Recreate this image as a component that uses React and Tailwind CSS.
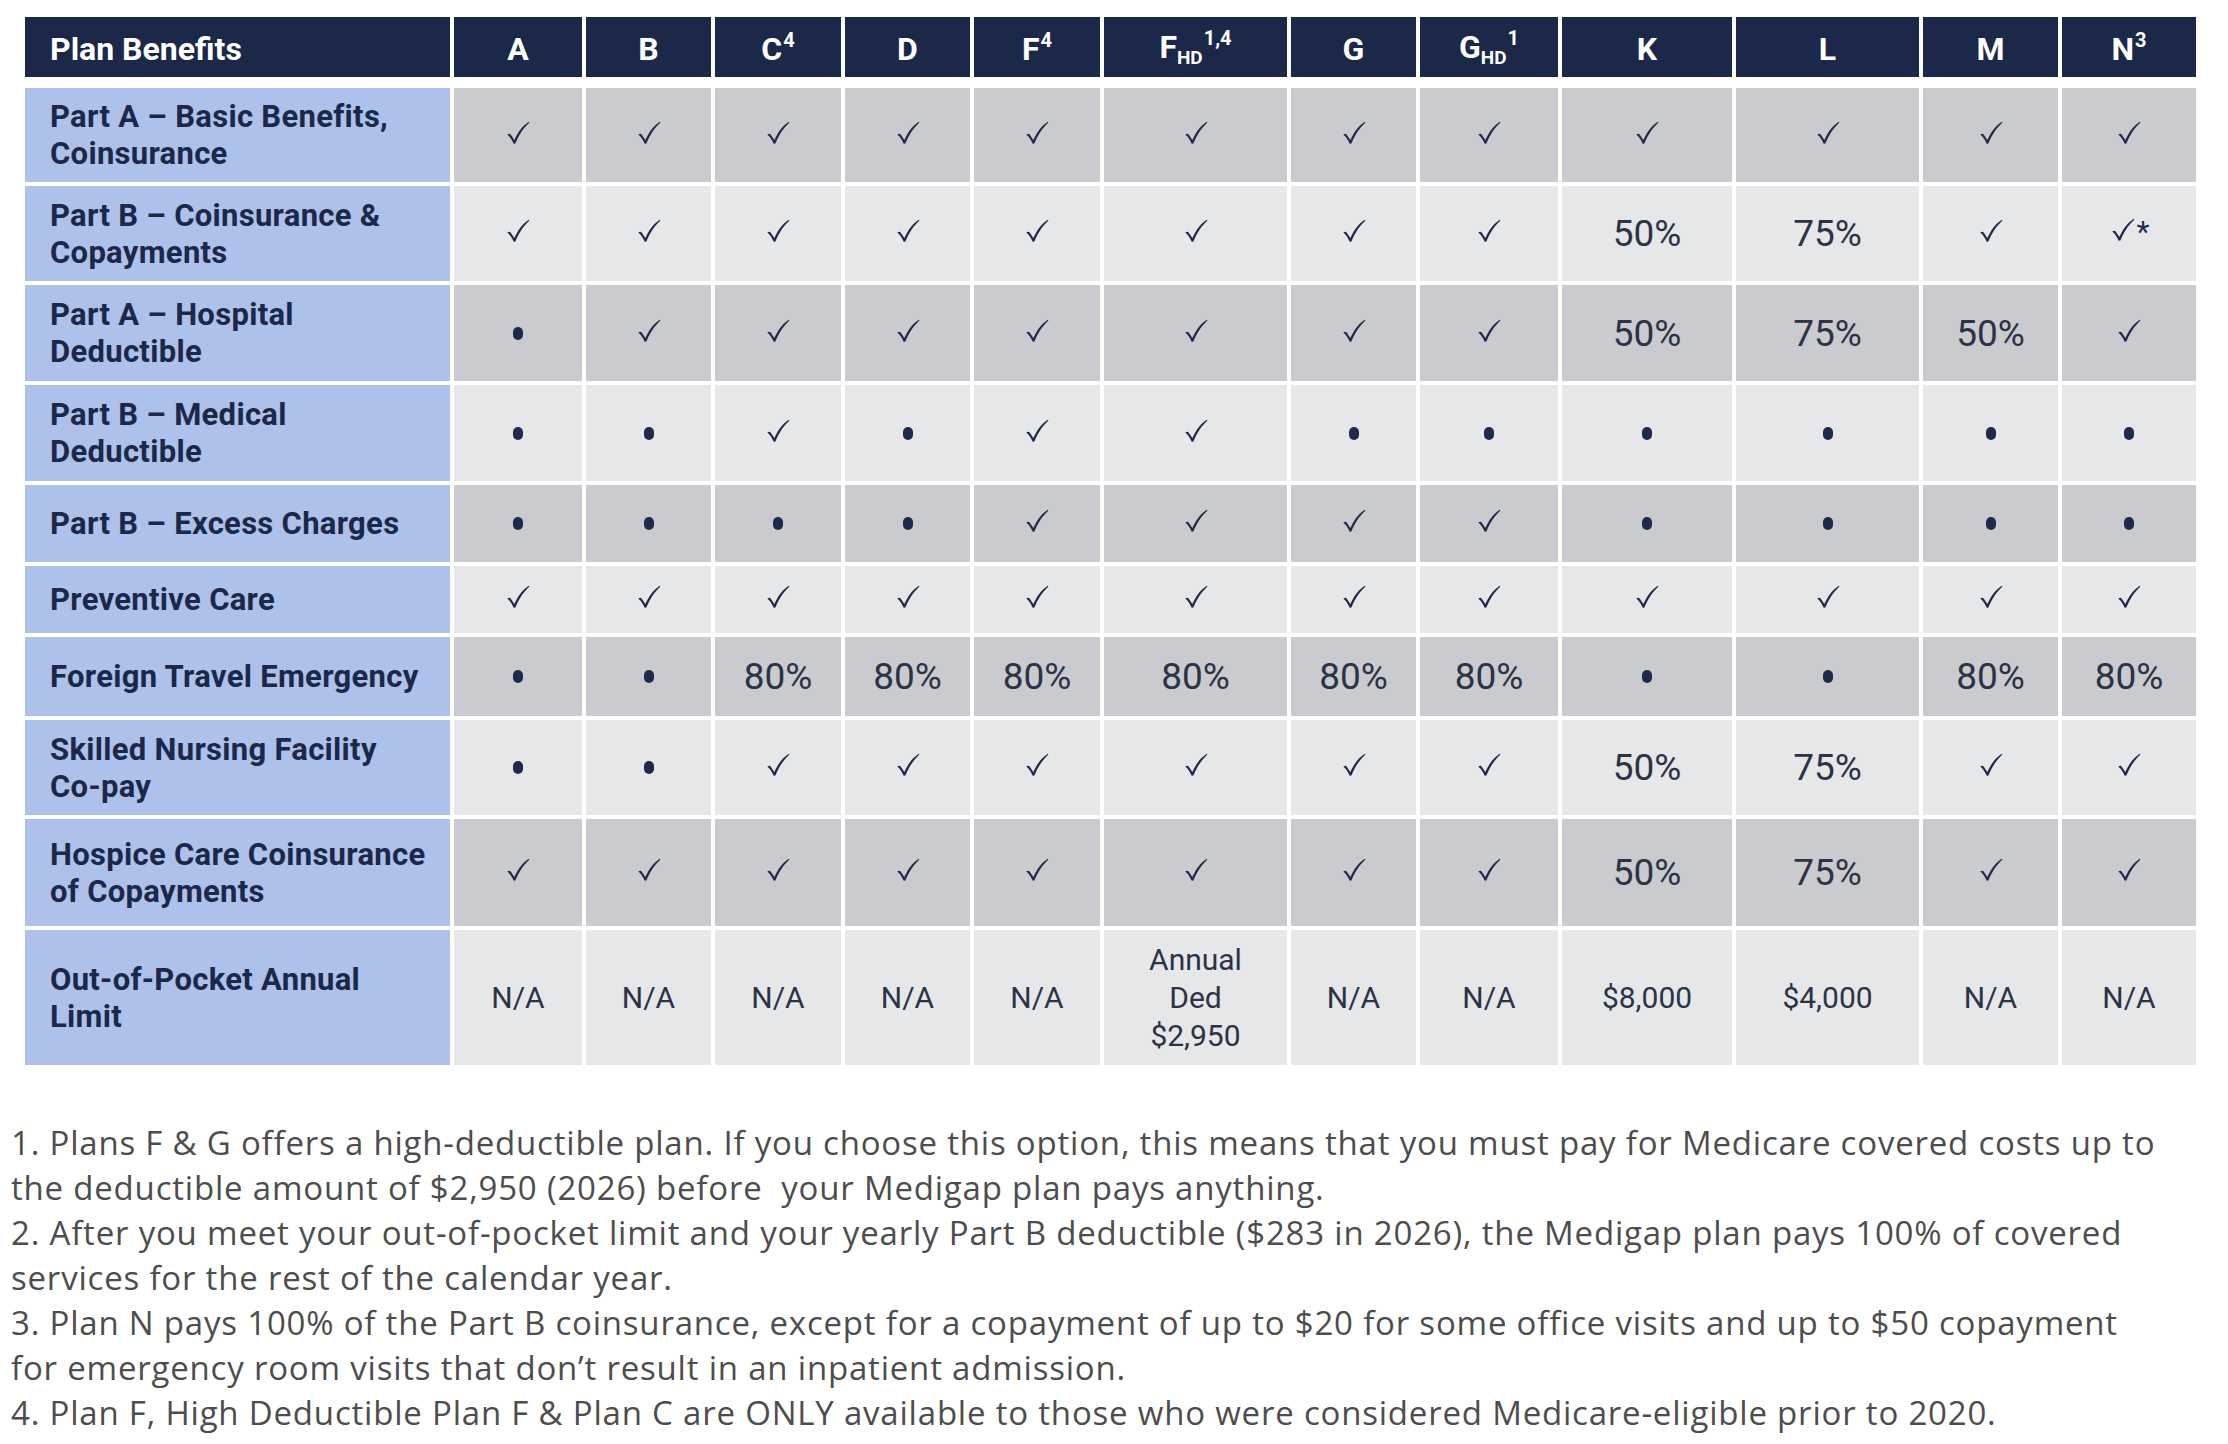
import React from "react";

const cols = [
  { key: "A", main: "A" },
  { key: "B", main: "B" },
  { key: "C", main: "C", sup: "4" },
  { key: "D", main: "D" },
  { key: "F", main: "F", sup: "4" },
  { key: "FHD", main: "F", sub: "HD", sup: "1,4" },
  { key: "G", main: "G" },
  { key: "GHD", main: "G", sub: "HD", sup: "1" },
  { key: "K", main: "K" },
  { key: "L", main: "L" },
  { key: "M", main: "M" },
  { key: "N", main: "N", sup: "3" },
];

const C = "check";
const D = "dot";

const rows = [
  {
    label: ["Part A – Basic Benefits,", "Coinsurance"],
    h: "h-[94px]",
    dark: true,
    cells: [C, C, C, C, C, C, C, C, C, C, C, C],
  },
  {
    label: ["Part B – Coinsurance &", "Copayments"],
    h: "h-[95px]",
    cells: [C, C, C, C, C, C, C, C, "50%", "75%", C, "check*"],
  },
  {
    label: ["Part A – Hospital", "Deductible"],
    h: "h-[96px]",
    dark: true,
    cells: [D, C, C, C, C, C, C, C, "50%", "75%", "50%", C],
  },
  {
    label: ["Part B – Medical", "Deductible"],
    h: "h-[96px]",
    cells: [D, D, C, D, C, C, D, D, D, D, D, D],
  },
  {
    label: ["Part B – Excess Charges"],
    h: "h-[77px]",
    dark: true,
    cells: [D, D, D, D, C, C, C, C, D, D, D, D],
  },
  {
    label: ["Preventive Care"],
    h: "h-[67px]",
    cells: [C, C, C, C, C, C, C, C, C, C, C, C],
  },
  {
    label: ["Foreign Travel Emergency"],
    h: "h-[79px]",
    dark: true,
    cells: [D, D, "80%", "80%", "80%", "80%", "80%", "80%", D, D, "80%", "80%"],
  },
  {
    label: ["Skilled Nursing Facility", "Co-pay"],
    h: "h-[95px]",
    cells: [D, D, C, C, C, C, C, C, "50%", "75%", C, C],
  },
  {
    label: ["Hospice Care Coinsurance", "of Copayments"],
    h: "h-[107px]",
    dark: true,
    cells: [C, C, C, C, C, C, C, C, "50%", "75%", C, C],
  },
  {
    label: ["Out-of-Pocket Annual", "Limit"],
    h: "h-[135px]",
    small: true,
    cells: [
      "N/A",
      "N/A",
      "N/A",
      "N/A",
      "N/A",
      ["Annual", "Ded", "$2,950"],
      "N/A",
      "N/A",
      "$8,000",
      "$4,000",
      "N/A",
      "N/A",
    ],
  },
];

function Check() {
  return (
    <svg width="28" height="28" viewBox="0 0 26 26" className="shrink-0 -mt-[5px]">
      <path
        d="M3 14.5 C4.5 13.6 5.5 13.4 6.5 14.8 L9.6 19.5 C13 12 17 6.5 23 2.5 L23.6 3.2 C18 8.5 14 14.5 10.6 22.8 L9 23 C7.5 19.5 5.5 16.5 3 14.5 Z"
        fill="#1e2a4a"
      />
    </svg>
  );
}

function Dot() {
  return <span className="block w-[10px] h-[13px] rounded-full bg-[#1e2a4a]" />;
}

function CellValue({ value, small }) {
  if (value === C) return <Check />;
  if (value === D) return <Dot />;
  if (value === "check*") {
    return (
      <span className="flex items-start">
        <Check />
        <span className="text-[30px] leading-none text-[#1e2a4a] -mt-[4px]">*</span>
      </span>
    );
  }
  if (Array.isArray(value)) {
    return (
      <span className="text-center text-[30px] leading-[38px] text-[#2b3346]">
        {value.map((l) => (
          <span key={l} className="block">
            {l}
          </span>
        ))}
      </span>
    );
  }
  return (
    <span
      className={
        small
          ? "text-[30px] leading-none text-[#2b3346]"
          : "text-[37px] leading-none text-[#2b3346]"
      }
    >
      {value}
    </span>
  );
}

function HeaderLabel({ col }) {
  return (
    <span className="flex items-start text-white font-bold pt-[3px]">
      <span className="text-[32px] leading-none">{col.main}</span>
      {col.sub && (
        <span className="text-[19px] leading-none mt-[17px]">{col.sub}</span>
      )}
      {col.sup && (
        <span className="text-[20px] leading-none -mt-[3px] ml-[1px]">{col.sup}</span>
      )}
    </span>
  );
}

export default function App() {
  return (
    <div
      className="min-h-screen bg-white"
      style={{ fontFamily: "Roboto, 'Liberation Sans', sans-serif" }}
    >
      <div className="pt-[17px] pl-[25px]">
        {/* TABLE */}
        <div className="grid grid-cols-[425px_128px_125px_126px_125px_126px_183px_125px_138px_170px_183px_135px_134px] gap-x-[4px] gap-y-[4px] w-max">
          {/* HEADER */}
          <div className="h-[60px] bg-[#1b2849] flex items-center pl-[25px] pt-[4px] mb-[7px]">
            <span className="text-white font-bold text-[32px]">Plan Benefits</span>
          </div>
          {cols.map((col) => (
            <div
              key={col.key}
              className="h-[60px] bg-[#1b2849] flex items-center justify-center mb-[7px]"
            >
              <HeaderLabel col={col} />
            </div>
          ))}

          {/* ROWS */}
          {rows.map((row, ri) => (
            <React.Fragment key={ri}>
              <div
                className={`${row.h} bg-[#adc1ea] flex flex-col justify-center pl-[25px] text-[31px] leading-[37px] tracking-[0.3px] font-bold text-[#1b2849]`}
              >
                {row.label.map((l) => (
                  <span key={l}>{l}</span>
                ))}
              </div>
              {row.cells.map((v, ci) => (
                <div
                  key={ci}
                  className={`${row.h} ${
                    row.dark ? "bg-[#cacbcf]" : "bg-[#e6e7e9]"
                  } flex items-center justify-center`}
                >
                  <CellValue value={v} small={row.small} />
                </div>
              ))}
            </React.Fragment>
          ))}
        </div>
      </div>

      {/* FOOTNOTES */}
      <div
        className="mt-[55px] pl-[11px] text-[33px] leading-[45px] tracking-[0.8px] text-[#4d4d4d] whitespace-nowrap"
        style={{ fontFamily: "'Open Sans', 'Noto Sans', sans-serif" }}
      >
        <p>
          1. Plans F &amp; G offers a high-deductible plan. If you choose this option, this means that you must pay for Medicare covered costs up to
          <br />
          the deductible amount of $2,950 (2026) before&nbsp; your Medigap plan pays anything.
        </p>
        <p>
          2. After you meet your out-of-pocket limit and your yearly Part B deductible ($283 in 2026), the Medigap plan pays 100% of covered
          <br />
          services for the rest of the calendar year.
        </p>
        <p>
          3. Plan N pays 100% of the Part B coinsurance, except for a copayment of up to $20 for some office visits and up to $50 copayment
          <br />
          for emergency room visits that don’t result in an inpatient admission.
        </p>
        <p>
          4. Plan F, High Deductible Plan F &amp; Plan C are ONLY available to those who were considered Medicare-eligible prior to 2020.
        </p>
      </div>
    </div>
  );
}
